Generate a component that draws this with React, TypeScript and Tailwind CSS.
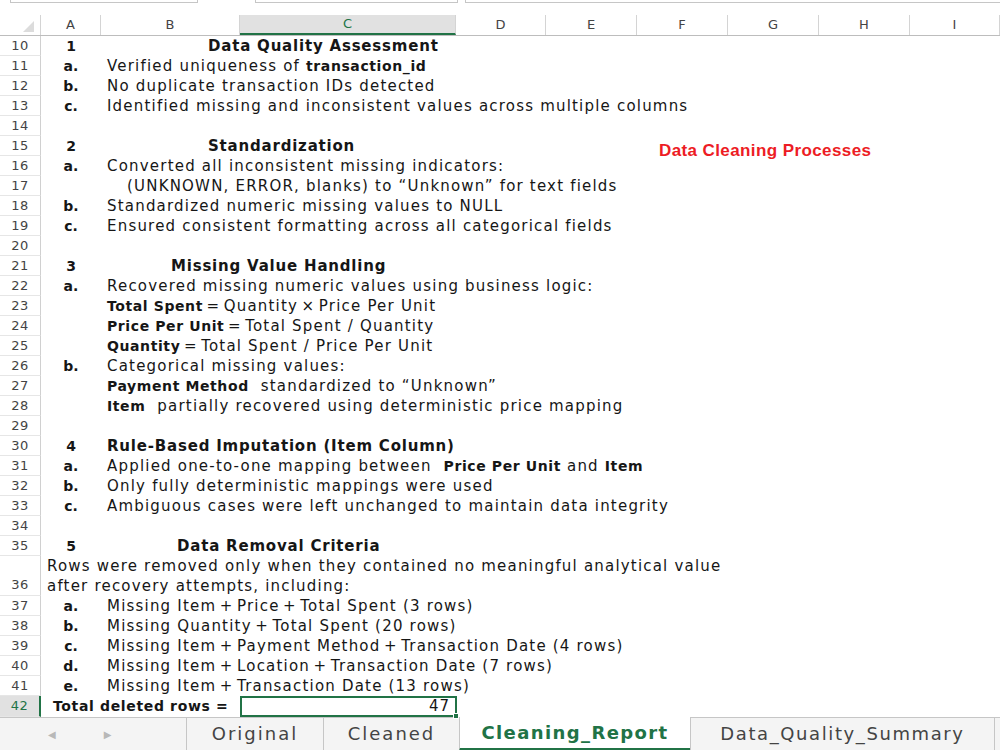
import type { ReactNode } from "react";

const cols = [
  { id: "A", w: "w-[60px]" },
  { id: "B", w: "w-[139px]" },
  { id: "C", w: "w-[216px]" },
  { id: "D", w: "w-[90px]" },
  { id: "E", w: "w-[91px]" },
  { id: "F", w: "w-[91px]" },
  { id: "G", w: "w-[91px]" },
  { id: "H", w: "w-[91px]" },
  { id: "I", w: "flex-1" },
];

type Line = {
  n: number;
  a?: string;
  body?: ReactNode;
  pad?: string;
  heading?: boolean;
};

// bold run inside a regular cell
const B = ({ children }: { children: ReactNode }) => (
  <span className="font-bold text-[14px] tracking-[0.6px]">{children}</span>
);

// operator with its surrounding spaces; DejaVu's + = × are wide, so tighten the gaps
const Op = ({ children }: { children: ReactNode }) => (
  <span className="[word-spacing:-2.5px]">
    {" "}
    {children}{" "}
  </span>
);

const lines: Line[] = [
  { n: 10, a: "1", body: "Data Quality Assessment", pad: "pl-[107px]", heading: true },
  { n: 11, a: "a.", body: <>Verified uniqueness of <B>transaction_id</B></> },
  { n: 12, a: "b.", body: "No duplicate transaction IDs detected" },
  { n: 13, a: "c.", body: "Identified missing and inconsistent values across multiple columns" },
  { n: 14 },
  { n: 15, a: "2", body: "Standardization", pad: "pl-[107px]", heading: true },
  { n: 16, a: "a.", body: "Converted all inconsistent missing indicators:" },
  { n: 17, body: "(UNKNOWN, ERROR, blanks) to \u201cUnknown\u201d for text fields", pad: "pl-[26px]" },
  { n: 18, a: "b.", body: "Standardized numeric missing values to NULL" },
  { n: 19, a: "c.", body: "Ensured consistent formatting across all categorical fields" },
  { n: 20 },
  { n: 21, a: "3", body: "Missing Value Handling", pad: "pl-[70px]", heading: true },
  { n: 22, a: "a.", body: "Recovered missing numeric values using business logic:" },
  { n: 23, body: <><B>Total Spent</B><Op>=</Op>Quantity<Op>×</Op>Price Per Unit</> },
  { n: 24, body: <><B>Price Per Unit</B><Op>=</Op>Total Spent / Quantity</> },
  { n: 25, body: <><B>Quantity</B><Op>=</Op>Total Spent / Price Per Unit</> },
  { n: 26, a: "b.", body: "Categorical missing values:" },
  { n: 27, body: <><B>Payment Method</B>{"\u00a0"} standardized to “Unknown”</> },
  { n: 28, body: <><B>Item</B>{"\u00a0"} partially recovered using deterministic price mapping</> },
  { n: 29 },
  { n: 30, a: "4", body: "Rule-Based Imputation (Item Column)", heading: true },
  { n: 31, a: "a.", body: <>Applied one-to-one mapping between{"\u00a0"} <B>Price Per Unit</B> and <B>Item</B></> },
  { n: 32, a: "b.", body: "Only fully deterministic mappings were used" },
  { n: 33, a: "c.", body: "Ambiguous cases were left unchanged to maintain data integrity" },
  { n: 34 },
  { n: 35, a: "5", body: "Data Removal Criteria", pad: "pl-[76px]", heading: true },
];

const removals: Line[] = [
  { n: 37, a: "a.", body: <>Missing Item<Op>+</Op>Price<Op>+</Op>Total Spent (3 rows)</> },
  { n: 38, a: "b.", body: <>Missing Quantity<Op>+</Op>Total Spent (20 rows)</> },
  { n: 39, a: "c.", body: <>Missing Item<Op>+</Op>Payment Method<Op>+</Op>Transaction Date (4 rows)</> },
  { n: 40, a: "d.", body: <>Missing Item<Op>+</Op>Location<Op>+</Op>Transaction Date (7 rows)</> },
  { n: 41, a: "e.", body: <>Missing Item<Op>+</Op>Transaction Date (13 rows)</> },
];

function RowHead({ n, tall, active }: { n: number; tall?: boolean; active?: boolean }) {
  return (
    <div
      className={`w-[41px] shrink-0 flex justify-center border-b border-[#e6e6e6] text-[13px] tracking-[0.4px] ${
        tall ? "items-end pb-[1px]" : "items-center"
      } ${
        active
          ? "bg-[#e1e1e1] text-[#217346] border-r-2 border-r-[#217346]"
          : "text-[#444] border-r border-r-[#d0d0d0]"
      }`}
    >
      {n}
    </div>
  );
}

function Cell({ line }: { line: Line }) {
  const style = line.heading ? "font-bold text-[15px] tracking-[0.8px]" : "text-[15px] tracking-[1.2px]";
  return (
    <div className={`${line.pad ?? "pl-[6px]"} whitespace-nowrap ${style}`}>
      <span>{line.body}</span>
    </div>
  );
}

function SheetRow({ line }: { line: Line }) {
  return (
    <div className="flex h-[20px]">
      <RowHead n={line.n} />
      <div className="w-[60px] shrink-0 flex items-center justify-center font-bold">{line.a}</div>
      {line.n === 15 ? (
        <div className="flex-1 grid grid-cols-[536px_1fr] grid-rows-[20px]">
          <div className="self-center">
            <Cell line={line} />
          </div>
          <div className="self-start pt-[5px] leading-[20px] pl-[22px] whitespace-nowrap font-bold text-[#ed1c24] text-[17px] tracking-[0.4px] [font-family:'Liberation_Sans',sans-serif]">
            Data Cleaning Processes
          </div>
        </div>
      ) : (
        <div className="flex-1 flex items-center">
          <Cell line={line} />
        </div>
      )}
    </div>
  );
}

export default function App() {
  return (
    <div className="w-[1000px] h-[750px] overflow-hidden bg-white flex flex-col text-[14px] text-[#161616] [font-family:'DejaVu_Sans',sans-serif]">
      {/* name box / formula bar edges */}
      <div className="h-[15px] shrink-0 flex items-start">
        <div className="ml-[10px] w-[188px] h-[3px] border-x border-b border-[#c6c6c6]" />
        <div className="ml-[57px] w-[203px] h-[3px] border-x border-b border-[#c6c6c6]" />
        <div className="ml-[7px] flex-1 h-[3px] border-l border-b border-[#c6c6c6]" />
      </div>

      {/* column headers */}
      <div className="h-[21px] shrink-0 flex border-b border-[#bdbdbd] text-[13px] text-[#444]">
        <div className="w-[41px] shrink-0 border-r border-[#d4d4d4] flex items-end justify-end pr-[6px] pb-[3px]">
          <svg width="11" height="11" viewBox="0 0 11 11">
            <polygon points="11,0 11,11 0,11" fill="#dcdcdc" />
          </svg>
        </div>
        {cols.map((c) => (
          <div
            key={c.id}
            className={`${c.w} shrink-0 flex items-center justify-center border-r border-[#d4d4d4] ${
              c.id === "C" ? "bg-[#e1e1e1] text-[#217346] border-b-2 border-b-[#217346]" : ""
            }`}
          >
            {c.id}
          </div>
        ))}
      </div>

      {/* sheet body */}
      <div className="flex-1 flex flex-col">
        {lines.map((l) => (
          <SheetRow key={l.n} line={l} />
        ))}

        <div className="flex h-[40px]">
          <RowHead n={36} tall />
          <div className="flex-1 pl-[6px] leading-[20px] text-[15px] tracking-[1.2px] whitespace-nowrap">
            Rows were removed only when they contained no meaningful analytical value
            <br />
            after recovery attempts, including:
          </div>
        </div>

        {removals.map((l) => (
          <SheetRow key={l.n} line={l} />
        ))}

        <div className="flex h-[21px]">
          <RowHead n={42} active />
          <div className="w-[199px] shrink-0 flex items-center pl-[12px] font-bold tracking-[0.65px] whitespace-nowrap">
            Total deleted rows =
          </div>
          <div className="relative w-[217px] shrink-0 border-2 border-[#217346] flex items-center justify-end pr-[5px] text-[15px] tracking-[1px]">
            47
            <div className="absolute -right-[4px] -bottom-[4px] w-[6px] h-[6px] bg-[#217346] border border-white" />
          </div>
        </div>
      </div>

      {/* sheet tabs */}
      <div className="h-[34px] shrink-0 flex bg-[#f4f4f4] text-[18px] text-[#444]">
        <div className="w-[187px] shrink-0 flex items-center border-t border-[#c6c6c6] border-r pl-[48px] gap-[48px] text-[#b8b8b8] text-[10px]">
          <span>◀</span>
          <span>▶</span>
        </div>
        <div className="w-[136px] shrink-0 border-t border-[#c6c6c6] flex items-center justify-center pb-[2px] tracking-[2px]">
          Original
        </div>
        <div className="w-[136px] shrink-0 border-t border-l border-[#c6c6c6] flex items-center justify-center pb-[2px] tracking-[2px]">
          Cleaned
        </div>
        <div className="w-[231px] shrink-0 bg-white border-l border-[#c6c6c6] border-b-[3px] border-b-[#217346] flex items-center justify-center font-bold text-[#217346] tracking-[1.4px]">
          Cleaning_Report
        </div>
        <div className="w-[305px] shrink-0 border-t border-l border-r border-[#c6c6c6] flex items-center justify-center pb-[2px] tracking-[1.6px]">
          Data_Quality_Summary
        </div>
        <div className="flex-1 border-t border-[#c6c6c6]" />
      </div>
    </div>
  );
}
